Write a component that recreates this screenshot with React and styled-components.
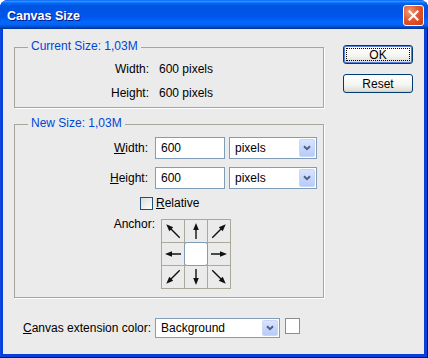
import React from 'react';
import styled, { createGlobalStyle } from 'styled-components';

const Global = createGlobalStyle`
  html, body { margin: 0; padding: 0; background: #fff; }
  body { font-family: "Liberation Sans", Arial, sans-serif; font-size: 12px; color: #000; }
  * { box-sizing: border-box; }
`;

const Window = styled.div`
  width: 428px;
  height: 358px;
  display: flex;
  flex-direction: column;
  background: #0a3fdc;
  border-radius: 8px 8px 0 0;
  overflow: hidden;
  box-shadow: inset -1px -1px 0 #00138c, inset 1px 0 0 #0c47e0;
`;

const TitleBar = styled.div`
  height: 29px;
  flex: none;
  display: flex;
  align-items: center;
  padding: 0 4px 0 7px;
  background: linear-gradient(to bottom, #0058ee 0%, #3593ff 4%, #288eff 6%, #127dff 8%, #036ffc 10%, #0262ee 14%, #0057e5 20%, #0054e3 24%, #0055eb 56%, #005bf5 66%, #026afe 76%, #0062ef 86%, #0052d6 92%, #0040ab 96%, #003092 100%);
`;

const Title = styled.div`
  flex: 1;
  padding-top: 4px;
  line-height: 15px;
  font-size: 12.5px;
  font-weight: bold;
  color: #fff;
  text-shadow: 1px 1px 0 #0a1883;
`;

const CloseButton = styled.div`
  width: 21px;
  height: 21px;
  margin-top: 2px;
  border: 1px solid #fff;
  border-radius: 3px;
  background: radial-gradient(circle at 30% 30%, #f29a78 0%, #e2582f 45%, #c83c10 100%);
  display: flex;
  align-items: center;
  justify-content: center;
`;

const Client = styled.div`
  flex: 1;
  margin: 0 4px 4px 3px;
  background: #ebebeb;
  display: flex;
  padding: 16px 0 0 11px;
`;

const LeftCol = styled.div`
  width: 310px;
  padding-top: 2px;
  display: flex;
  flex-direction: column;
`;

const RightCol = styled.div`
  margin-left: 19px;
  display: flex;
  flex-direction: column;
  gap: 10px;
`;

const Group = styled.div`
  position: relative;
  height: ${p => p.$h}px;
  margin-top: ${p => p.$mt || 0}px;
  border: 1px solid #a7a69c;
  box-shadow: 1px 1px 0 #fff;
`;

const Legend = styled.span`
  position: absolute;
  top: -10px;
  left: 13px;
  padding: 0 3px;
  line-height: 16px;
  background: #ebebeb;
  color: #0046d5;
`;

const InfoGrid = styled.div`
  display: grid;
  grid-template-columns: 134px auto;
  column-gap: 10px;
  row-gap: 8px;
  padding-top: 13px;
  line-height: 16px;
`;

const InfoLabel = styled.span`
  text-align: right;
`;

const Fields = styled.div`
  display: flex;
  flex-direction: column;
  gap: 8px;
  padding-top: 12px;
`;

const FieldRow = styled.div`
  display: flex;
  align-items: center;
`;

const FieldLabel = styled.label`
  width: ${p => p.$w}px;
  margin-right: ${p => p.$mr}px;
  text-align: right;
  line-height: 16px;
  flex: none;
`;

const Input = styled.input`
  width: 70px;
  height: 22px;
  border: 1px solid #7f9db9;
  padding: 0 5px;
  font: inherit;
  color: #000;
  background: #fff;
  outline: none;
`;

const SelectBox = styled.div`
  width: ${p => p.$w}px;
  height: ${p => p.$h}px;
  margin-left: ${p => p.$ml || 0}px;
  border: 1px solid #7f9db9;
  background: #fff;
  display: flex;
  align-items: stretch;
  padding: 1px 1px 1px 5px;
  flex: none;
`;

const SelectText = styled.span`
  flex: 1;
  display: flex;
  align-items: center;
`;

const DropButton = styled.span`
  width: 16px;
  background: linear-gradient(to bottom, #d9e4fe, #b7cbf8);
  border: 1px solid #c8d6f8;
  border-radius: 2px;
  display: flex;
  align-items: center;
  justify-content: center;
`;

const CheckRow = styled.div`
  display: flex;
  align-items: center;
  height: 16px;
  margin-top: 6px;
  padding-left: 125px;
  gap: 3px;
`;

const CheckBox = styled.span`
  width: 13px;
  height: 13px;
  border: 1px solid #1c5180;
  background: linear-gradient(135deg, #dcdcd7, #fff);
`;

const AnchorRow = styled.div`
  display: flex;
  align-items: flex-start;
  margin-top: 8px;
`;

const AnchorLabel = styled.span`
  width: 140px;
  margin-top: -2px;
  line-height: 14px;
  text-align: right;
`;

const AnchorGrid = styled.div`
  margin-left: 6px;
  display: grid;
  grid-template-columns: repeat(3, 22px);
  grid-template-rows: repeat(3, 22px);
  gap: 1px;
  padding: 1px;
  background: #aca899;
`;

const AnchorCell = styled.div`
  background: #ebebeb;
  display: flex;
  align-items: center;
  justify-content: center;
`;

const CenterCell = styled.div`
  margin: -1px;
  background: #fff;
  border: 1px solid #7f9db9;
  border-radius: 3px;
`;

const BottomRow = styled.div`
  display: flex;
  align-items: flex-start;
  margin-top: 20px;
  padding-left: 9px;
`;

const BottomLabel = styled.label`
  width: 132px;
  height: 20px;
  display: flex;
  align-items: center;
  line-height: 16px;
`;

const Swatch = styled.span`
  width: 15px;
  height: 16px;
  margin-left: 5px;
  border: 1px solid #8c8c8c;
  background: #fff;
`;

const Button = styled.button`
  position: relative;
  width: 70px;
  height: 19px;
  padding: 0;
  font: inherit;
  color: #000;
  border: 1px solid #003c74;
  border-radius: 3px;
  background: linear-gradient(to bottom, #ffffff 0%, #f4f4f0 60%, #dcd8ce 100%);
  box-shadow: ${p => (p.$default ? 'inset 0 0 0 1px #5b7fd6' : 'inset 0 -1px 0 #d6d0c5')};
  &::after {
    content: '';
    display: ${p => (p.$default ? 'block' : 'none')};
    position: absolute;
    inset: 2px;
    border: 1px dotted #000;
    border-radius: 1px;
  }
`;

const U = styled.span`
  text-decoration: underline;
`;

function Chevron() {
  return (
    <svg width="8" height="6" viewBox="0 0 8 6">
      <polyline points="1,1.2 4,4.2 7,1.2" fill="none" stroke="#4d6185" strokeWidth="2" />
    </svg>
  );
}

function Select({ w, h, ml, children }) {
  return (
    <SelectBox $w={w} $h={h} $ml={ml}>
      <SelectText>{children}</SelectText>
      <DropButton>
        <Chevron />
      </DropButton>
    </SelectBox>
  );
}

function Arrow({ angle }) {
  const diag = angle % 90 !== 0;
  const L = diag ? 19 : 16;
  const tip = 11 - L / 2;
  const tail = 11 + L / 2;
  const headLen = 7;
  const headW = 2.8;
  return (
    <svg width="22" height="22" viewBox="0 0 22 22">
      <g transform={`rotate(${angle} 11 11)`}>
        <line x1="11" y1={tail} x2="11" y2={tip + headLen - 1} stroke="#111" strokeWidth="1.4" />
        <polygon
          points={`11,${tip} ${11 - headW},${tip + headLen} ${11 + headW},${tip + headLen}`}
          fill="#111"
        />
      </g>
    </svg>
  );
}

const anchors = [-45, 0, 45, -90, null, 90, -135, 180, 135];

export default function App() {
  return (
    <>
      <Global />
      <Window>
        <TitleBar>
          <Title>Canvas Size</Title>
          <CloseButton>
            <svg width="11" height="11" viewBox="0 0 11 11">
              <path d="M1.5 1.5 L9.5 9.5 M9.5 1.5 L1.5 9.5" stroke="#fff" strokeWidth="2.2" strokeLinecap="square" />
            </svg>
          </CloseButton>
        </TitleBar>
        <Client>
          <LeftCol>
            <Group $h={61}>
              <Legend>Current Size: 1,03M</Legend>
              <InfoGrid>
                <InfoLabel>Width:</InfoLabel>
                <span>600 pixels</span>
                <InfoLabel>Height:</InfoLabel>
                <span>600 pixels</span>
              </InfoGrid>
            </Group>
            <Group $h={174} $mt={16}>
              <Legend>New Size: 1,03M</Legend>
              <Fields>
                <FieldRow>
                  <FieldLabel $w={133} $mr={7}>
                    <U>W</U>idth:
                  </FieldLabel>
                  <Input defaultValue="600" />
                  <Select w={88} h={22} ml={4}>pixels</Select>
                </FieldRow>
                <FieldRow>
                  <FieldLabel $w={133} $mr={7}>
                    <U>H</U>eight:
                  </FieldLabel>
                  <Input defaultValue="600" />
                  <Select w={88} h={22} ml={4}>pixels</Select>
                </FieldRow>
              </Fields>
              <CheckRow>
                <CheckBox />
                <span>
                  <U>R</U>elative
                </span>
              </CheckRow>
              <AnchorRow>
                <AnchorLabel>Anchor:</AnchorLabel>
                <AnchorGrid>
                  {anchors.map((a, i) =>
                    a === null ? (
                      <CenterCell key={i} />
                    ) : (
                      <AnchorCell key={i}>
                        <Arrow angle={a} />
                      </AnchorCell>
                    )
                  )}
                </AnchorGrid>
              </AnchorRow>
            </Group>
            <BottomRow>
              <BottomLabel>
                <span>
                  <U>C</U>anvas extension color:
                </span>
              </BottomLabel>
              <Select w={125} h={20}>Background</Select>
              <Swatch />
            </BottomRow>
          </LeftCol>
          <RightCol>
            <Button $default>OK</Button>
            <Button>Reset</Button>
          </RightCol>
        </Client>
      </Window>
    </>
  );
}
